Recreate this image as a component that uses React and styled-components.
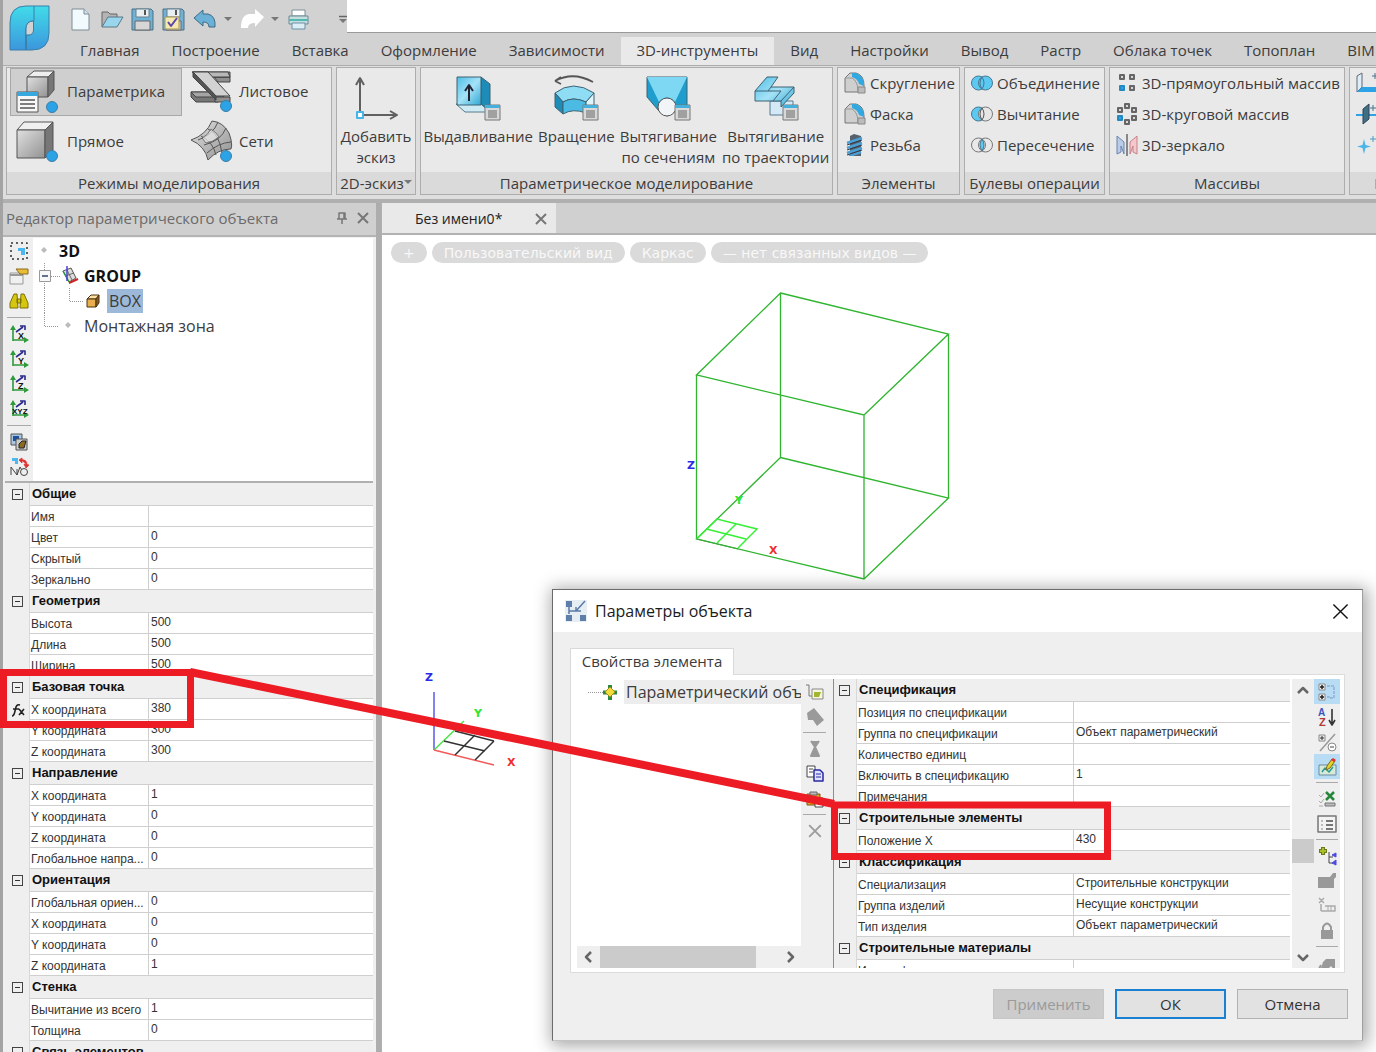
import React from "react";
import styled, { createGlobalStyle } from "styled-components";

const ui = '"Open Sans", "Noto Sans", sans-serif';
const small = '"Liberation Sans", Arial, sans-serif';

const Global = createGlobalStyle`
  * { box-sizing: border-box; }
  body { margin: 0; background: #fff; font-family: ${ui}; font-size: 15px; color: #3c3c3c; overflow: hidden; }
  button { font: inherit; color: inherit; border: 0; padding: 0; background: none; cursor: default; }
  svg { display: block; flex: none; }
`;

const Shell = styled.div`
  position: relative;
  display: flex;
  flex-direction: column;
  height: 100vh;
  padding-left: 3px;
  background: #a3a3a3;
  overflow: hidden;
`;

/* ---------- header ---------- */
const Header = styled.header`
  display: grid;
  grid-template-columns: 61px 1fr;
  grid-template-rows: 33px 32px;
  background: #d2d2d2;
  border-bottom: 1px solid #adadad;
`;
const Logo = styled.div`
  grid-row: 1 / 3;
  padding: 5px 0 0 6px;
`;
const TopLine = styled.div`
  display: flex;
`;
const QuickBar = styled.div`
  display: flex;
  align-items: center;
  flex: 0 0 283px;
  padding: 6px 0 0 5px;
  gap: 8px;
`;
const QuickButton = styled.button`
  width: ${(p) => (p.$narrow ? 8 : 23)}px;
  height: 24px;
  margin-left: ${(p) => (p.$push ? "auto" : 0)};
  display: grid;
  place-items: center;
`;
const Blank = styled.div`
  flex: 1;
  background: #fff;
  border-bottom: 1px solid #9a9a9a;
`;
const Tabs = styled.nav`
  display: flex;
  min-width: 0;
  overflow: hidden;
  padding-top: 4px;
`;
const RibbonTab = styled.button`
  flex: none;
  padding: 0 16px 3px;
  white-space: nowrap;
  line-height: 24px;
  font-size: 15px;
  background: ${(p) => (p.$on ? "#e9e9e9" : "transparent")};
`;

/* ---------- ribbon ---------- */
const Ribbon = styled.div`
  display: flex;
  gap: 4px;
  flex: 0 0 135px;
  padding: 1px 0 4px 3px;
  background: #dedede;
  border-bottom: 2px solid #b0b0b0;
  overflow: hidden;
`;
const Group = styled.section`
  flex: 0 0 ${(p) => p.$w}px;
  display: flex;
  flex-direction: column;
  border: 1px solid #adadad;
  background: #e9e9e9;
  overflow: hidden;
`;
const GroupBody = styled.div`
  flex: 1;
  min-height: 0;
  display: flex;
  flex-direction: ${(p) => (p.$column ? "column" : "row")};
  justify-content: ${(p) => (p.$around ? "space-around" : "flex-start")};
`;
const GroupTitle = styled.div`
  flex: 0 0 22px;
  display: flex;
  align-items: center;
  justify-content: center;
  line-height: 22px;
  white-space: nowrap;
  background: #dadada;
`;
const ModeGrid = styled.div`
  display: grid;
  grid-template-columns: 172px 1fr;
  grid-template-rows: 48px 48px;
  row-gap: 2px;
  flex: 1;
  padding-left: 3px;
`;
const ModeButton = styled.button`
  display: flex;
  align-items: center;
  gap: 5px;
  padding: 0 0 2px 5px;
  border: 1px solid ${(p) => (p.$on ? "#a8a8a8" : "transparent")};
  background: ${(p) => (p.$on ? "#cfcfcf" : "transparent")};
`;
const BigButton = styled.button`
  display: flex;
  flex-direction: column;
  align-items: center;
  padding-top: 7px;
  gap: 5px;
  line-height: 21px;
  white-space: pre-line;
`;
const LineButton = styled.button`
  display: flex;
  align-items: center;
  flex: 0 0 31px;
  gap: 4px;
  padding: 0 0 2px 6px;
  white-space: nowrap;
`;

/* ---------- body ---------- */
const Body = styled.div`
  flex: 1;
  min-height: 0;
  display: flex;
  padding-top: 2px;
  background: #b0b0b0;
`;
const Side = styled.aside`
  flex: 0 0 378px;
  display: flex;
  flex-direction: column;
  background: #f0f0f0;
  border-right: 5px solid #adadad;
  overflow: hidden;
`;
const SideTitle = styled.div`
  flex: 0 0 34px;
  display: flex;
  align-items: center;
  gap: 9px;
  padding: 0 7px 3px 3px;
  color: #6a6a6a;
  background: #cfcfcf;
  border-bottom: 2px solid #b4b4b4;
  span { flex: 1; }
`;
const TreeArea = styled.div`
  display: flex;
  flex: 0 0 244px;
  padding: 1px 3px 0 2px;
`;
const Tools = styled.div`
  flex: 0 0 ${(p) => p.$w}px;
  display: flex;
  flex-direction: column;
  align-items: stretch;
  background: #efefef;
  overflow: hidden;
`;
const Tool = styled.button`
  flex: 0 0 25px;
  display: grid;
  place-items: center;
  background: ${(p) => (p.$on ? "#b9dcf5" : "transparent")};
`;
const ToolLine = styled.div`
  flex: 0 0 ${(p) => p.$h}px;
  display: flex;
  align-items: center;
  padding: 0 2px;
  &::before { content: ""; flex: 1; height: 1px; background: #a9a9a9; }
`;
const Tree = styled.div`
  flex: 1;
  min-width: 0;
  background: #fff;
  overflow: hidden;
`;
const TreeRow = styled.div`
  display: flex;
  align-items: center;
  height: 25px;
  font-size: 16px;
  line-height: 24px;
  white-space: nowrap;
  font-weight: ${(p) => (p.$bold ? 700 : 400)};
  color: ${(p) => (p.$bold ? "#111" : "#3c3c3c")};
`;
const Picked = styled.span`
  padding: 0 2px;
  margin: 0 -1px;
  background: ${(p) => p.$bg};
`;

/* ---------- property table ---------- */
const GridFrame = styled.div`
  flex: 1;
  min-width: 0;
  min-height: 0;
  overflow: hidden;
  border-top: ${(p) => (p.$line ? "2px solid #b0b0b0" : "0")};
  margin: ${(p) => (p.$line ? "0 3px 0 2px" : "0")};
`;
const PropTable = styled.table`
  width: 100%;
  table-layout: fixed;
  border-spacing: 0;
  font-family: ${small};
  font-size: 12px;
  color: #333;
  th, td { padding: 0 2px; text-align: left; white-space: nowrap; overflow: hidden; }
`;
const HeadCell = styled.th`
  height: 23px;
  line-height: 20px;
  font-size: 13px;
  font-weight: 700;
  color: #111;
  background: #efefef;
  border-bottom: 1px solid #cfcfcf;
`;
const Gutter = styled.td`
  background: #efefef;
  border-right: 1px solid #d8d8d8;
  svg { margin-left: 4px; }
`;
const NameCell = styled.td`
  height: 21px;
  line-height: 17px;
  background: #fff;
  border-bottom: 1px solid #cfcfcf;
  border-right: 1px solid #cfcfcf;
  && { padding: 3px 0 0 1px; }
`;
const ValueCell = styled.td`
  height: 21px;
  line-height: 18px;
  background: #fff;
  border-bottom: 1px solid #cfcfcf;
  && { padding-bottom: 2px; }
`;
const Fold = styled.button`
  width: 11px;
  height: 11px;
  display: block;
  margin: 0 4px 0 auto;
  border: 1px solid #444;
  &::before { content: ""; display: block; height: 1px; margin: 0 2px; background: #333; }
`;

/* ---------- drawing area ---------- */
const Work = styled.main`
  flex: 1;
  min-width: 0;
  display: flex;
  flex-direction: column;
  margin-left: 1px;
  background: #fff;
`;
const DocBar = styled.div`
  flex: 0 0 32px;
  display: flex;
  background: #d0d0d0;
  border-bottom: 2px solid #b2b2b2;
`;
const DocTab = styled.div`
  flex: 0 0 174px;
  display: flex;
  align-items: center;
  justify-content: space-between;
  padding: 1px 9px 0 33px;
  font-size: 14px;
  color: #222;
  background: #e9e9e9;
`;
const Canvas = styled.div`
  position: relative;
  flex: 1;
  min-height: 0;
`;
const Pills = styled.div`
  display: flex;
  gap: 5px;
  padding: 7px 0 0 9px;
`;
const Pill = styled.button`
  height: 21px;
  line-height: 20px;
  padding: 0 12px;
  border-radius: 11px;
  font-family: "DejaVu Sans", sans-serif;
  font-size: 14px;
  color: #f8f8f8;
  background: #dadada;
`;
const Scene = styled.svg`
  position: absolute;
  left: 0;
  top: 0;
  width: 100%;
  height: 100%;
  pointer-events: none;
  text { font: 700 11px "DejaVu Sans", sans-serif; }
`;
const Marks = styled.svg`
  position: absolute;
  left: 0;
  top: 0;
  width: 100%;
  height: 100%;
  pointer-events: none;
`;

/* ---------- dialog ---------- */
const Dialog = styled.section`
  position: absolute;
  left: 170px;
  top: 354px;
  width: 811px;
  border: 1px solid #6b6b6b;
  border-right-color: #a0a0a0;
  border-bottom-color: #c4c4c4;
  background: #efefef;
  box-shadow: 2px 2px 16px 3px rgba(0, 0, 0, 0.34);
`;
const DialogTitle = styled.div`
  height: 42px;
  display: flex;
  align-items: center;
  gap: 7px;
  padding: 0 13px 0 11px;
  font-size: 16px;
  color: #1c1c1c;
  background: #fff;
  span { flex: 1; }
`;
const DialogTab = styled.div`
  width: 164px;
  height: 27px;
  margin: 16px 0 -1px 17px;
  position: relative;
  line-height: 25px;
  text-align: center;
  font-size: 15px;
  background: #fff;
  border: 1px solid #d9d9d9;
  border-bottom: 0;
`;
const Pane = styled.div`
  display: flex;
  height: 299px;
  margin: 0 17px;
  padding: 4px 4px 4px 6px;
  background: #fff;
  border: 1px solid #dcdcdc;
`;
const TreeColumn = styled.div`
  flex: 0 0 224px;
  min-width: 0;
  display: flex;
  flex-direction: column;
`;
const HScroll = styled.div`
  flex: 0 0 22px;
  display: flex;
  align-items: center;
  background: #efefef;
`;
const HThumb = styled.div`
  width: 156px;
  align-self: stretch;
  background: #cbcbcb;
`;
const ArrowButton = styled.button`
  flex: 0 0 23px;
  display: grid;
  place-items: center;
  margin-left: ${(p) => (p.$end ? "auto" : 0)};
`;
const Divider = styled.div`
  width: 6px;
  background: #efefef;
  border-right: 1px solid #8d8d8d;
`;
const VScroll = styled.div`
  flex: 0 0 22px;
  margin-left: 2px;
  display: flex;
  flex-direction: column;
  background: #efefef;
`;
const VThumb = styled.div`
  height: 24px;
  margin-top: 137px;
  background: #cbcbcb;
`;
const VSpace = styled.div`
  flex: 1;
`;
const Buttons = styled.div`
  display: flex;
  justify-content: flex-end;
  gap: 11px;
  padding: 16px 14px 21px;
`;
const PushButton = styled.button`
  width: 111px;
  height: 30px;
  color: ${(p) => (p.disabled ? "#9a9a9a" : "#333")};
  background: ${(p) => (p.disabled ? "#cccccc" : "#e2e2e2")};
  border: ${(p) => (p.$main ? "2px solid #1a80d2" : p.disabled ? "1px solid #c6c6c6" : "1px solid #b2b2b2")};
`;

/* ---------- drawings ---------- */
const Svg = ({ w = 20, h = w, vb, children, ...rest }) => (
  <svg width={w} height={h} viewBox={vb || `0 0 ${w} ${h}`} fill="none" strokeLinejoin="round" {...rest}>
    {children}
  </svg>
);

const Defs = () => (
  <svg width="0" height="0" style={{ position: "absolute" }} aria-hidden="true">
    <defs>
      <linearGradient id="logo" x1="0" y1="0" x2="0" y2="1"><stop offset="0" stopColor="#41dcea" /><stop offset="1" stopColor="#3c96dc" /></linearGradient>
      <linearGradient id="grey" x1="0" y1="0" x2="1" y2="1"><stop offset="0" stopColor="#e0e0e0" /><stop offset="1" stopColor="#929292" /></linearGradient>
      <linearGradient id="sky" x1="0" y1="0" x2="1" y2="1"><stop offset="0" stopColor="#4fbfe6" /><stop offset=".5" stopColor="#a5e2f7" /><stop offset="1" stopColor="#2ea6d3" /></linearGradient>
    </defs>
  </svg>
);

const LogoIcon = () => (
  <Svg w={42} h={48} stroke="#3a7fa8">
    <path d="M17 1H40V28Q40 45 23 45H17V30H19Q24 30 24 25V16Q17 16 17 24V45H1V18Q1 1 17 1Z" fill="url(#logo)" />
    <path d="M25 1V16M17 24V45" />
    <path d="M24.500 16Q17 16 17 24V30H19Q24.500 30 24.500 25Z" fill="#d2d2d2" />
  </Svg>
);
const Floppy = ({ check }) => (
  <>
    <path d="M1 1H20L22 3V22H1Z" fill="#6fb2d6" stroke="#4a7187" />
    <path d="M5 1H18V9H5Z" fill="#e9eef0" stroke="#66808e" />
    <path d="M13 2V7H15V2Z" fill="#555" />
    <path d="M4 13H19V22H4Z" fill="#d6d6d6" stroke="#666" />
    {check && <><path d="M3 9H17V21H3Z" fill="#f5e8b0" stroke="#a69455" /><path d="M6 14L9 18L15 10" stroke="#5a46a8" strokeWidth="2" /></>}
  </>
);
const quick = {
  page: <><path d="M3 1H15L20 6V22H3Z" fill="#f3fafd" stroke="#7c8c94" /><path d="M15 1V6H20" fill="#cfe8f4" stroke="#7c8c94" /></>,
  open: <><path d="M2 19V4H8L10 6H17V10" fill="#b4b4b4" stroke="#666" /><path d="M2 19L8 9H23L17 19Z" fill="#9ad5ee" stroke="#5c7886" /></>,
  save: <Floppy />,
  saveAs: <Floppy check />,
  undo: <path d="M1 10L10 2V6H15Q23 8 22 19H16Q16 14 10 14V18Z" fill="#6bb0d6" stroke="#3c6a84" />,
  redo: <path d="M24 9L15 1V6H9Q1 7 1 20H8Q8 15 15 15V19Z" fill="#fff" />,
  print: <><path d="M5 2H18V8H5Z" fill="#fff" stroke="#7d8f96" /><path d="M2 8H21V16H2Z" fill="#c5dfe0" stroke="#6a8a92" /><path d="M2 12H21" stroke="#55b8b3" strokeWidth="2" /><path d="M5 15H18V21H5Z" fill="#dceef5" stroke="#6a8fa6" /></>,
};
const Caret = ({ bar }) => (
  <Svg w={8} h={10}>{bar && <path d="M0 1.500H8" stroke="#666" strokeWidth="1.500" />}<path d={bar ? "M0 4H8L4 8Z" : "M0 2H8L4 6Z"} fill="#777" /></Svg>
);

const Dot = ({ x = 36, y = 38 }) => <circle cx={x} cy={y} r="5.500" fill="#2ba3e6" stroke="#3c7fa5" />;
const ModeParam = () => (
  <Svg w={46}><g stroke="#555"><path d="M11 9L18 3H38L32 9Z" fill="#eee" /><path d="M11 9H32V29H11Z" fill="url(#grey)" /><path d="M32 9L38 3V22L32 29Z" fill="#777" /><path d="M1 24H22V44H1Z" fill="#f7f7f7" /></g><path d="M1 24H22V28H1Z" fill="#37a9df" /><path d="M4 32H19M4 36H19M4 40H19" stroke="#555" strokeWidth="1.500" /><Dot x={36} y={39} /></Svg>
);
const ModeDirect = () => (
  <Svg w={46}><g stroke="#555"><path d="M1 12L8 4H37L29 12Z" fill="#f0f0f0" /><path d="M1 12H29V40H1Z" fill="url(#grey)" /><path d="M29 12L37 4V32L29 40Z" fill="#777" /></g><Dot x={36} y={38} /></Svg>
);
const ModeSheet = () => (
  <Svg w={46} stroke="#444"><path d="M26 9H42V14H30ZM4 4L42 4V9H25Z" fill="#8f8f8f" /><path d="M5 4H40L42 9H20Z" fill="#b8b8b8" /><path d="M3 24H30V34H8L3 29Z" fill="#777" /><path d="M3 24H32L36 29H8Z" fill="#a5a5a5" /><path d="M27 29H42V34H27Z" fill="#8f8f8f" /><path d="M5 4H20L42 28H28Z" fill="#d2d2d2" /><path d="M5 4L28 28V32L5 9Z" fill="#555" /><Dot x={38} y={38} /></Svg>
);
const ModeMesh = () => (
  <Svg w={46} stroke="#555"><path d="M3 22Q18 17 24 3Q35 4 41 15Q45 26 43 31Q30 31 20 42Q17 28 3 22Z" fill="url(#grey)" /><path d="M10 22Q25 17 30 4M16 27Q33 23 38 10M19 35Q30 25 43 24M20 11Q31 15 34 35M13 18Q25 24 28 37" fill="none" /><path d="M14 20Q20 17 23 11Q29 15 31 19Q25 24 18 25Z" fill="#e8e8e8" opacity=".7" /><Dot x={38} y={38} /></Svg>
);
const SketchIcon = () => (
  <Svg w={46} stroke="#606060" strokeWidth="2"><path d="M7 37V4M3 10L7 3L11 10M11 40H43M37 36L44 40L37 44" /><path d="M4 37H10V43H4Z" fill="#fff" stroke="#45b4e6" /></Svg>
);
const MiniForm = () => (
  <g><path d="M30 30H45V45H30Z" fill="#d8d8d8" stroke="#777" /><path d="M30 30H45V33H30Z" fill="#45b0dc" /><path d="M33 35H42V43H33Z" fill="#a0a0a0" /></g>
);
const big = {
  extrude: <><path d="M1 29L10 37H34L27 29Z" fill="#cdeaf5" stroke="#5a7a88" /><path d="M26 2L35 9V37L26 29Z" fill="#1d8cb8" stroke="#3d6272" /><path d="M2 2H26V30H2Z" fill="url(#sky)" stroke="#3d6272" /><path d="M14 26V12M10 16L14 10L18 16" stroke="#223" strokeWidth="2" /></>,
  revolve: <><path d="M2 6Q20 -4 40 7M2 6L8 2M2 6L8 9" stroke="#555" strokeWidth="1.800" /><path d="M2 18Q20 4 41 18L33 27Q20 21 10 27Z" fill="#8fdcf5" stroke="#3d6272" /><path d="M2 18L10 27V39L2 32Z" fill="#1d8cb8" stroke="#3d6272" /><path d="M10 27Q20 21 33 27V38Q20 33 10 39Z" fill="#4bbbe3" stroke="#3d6272" /><path d="M41 18V30L33 38V27Z" fill="#dff3fa" stroke="#3d6272" /></>,
  loft: <><path d="M2 2H42V30L22 41L14 36L2 22Z" fill="#1f9dcc" stroke="#3d6272" /><path d="M2 2H42L30 27Q22 18 14 27Z" fill="#7ed8f3" /><circle cx="22" cy="32" r="9" fill="#f1f5f7" stroke="#555" /></>,
  sweep: <><path d="M17 26H40V40H17Z" fill="#d5e8f5" stroke="#557a90" /><path d="M2 16L14 2H25L18 12H41V18L28 32V26H2Z" fill="url(#sky)" stroke="#3d6272" /><path d="M2 16H28L20 26M41 12L28 26M18 12L15 16" stroke="#3d6272" /></>,
};
const Cell = ({ x, y, on }) => <path d={`M${x} ${y}h4v4h-4Z`} fill={on ? "#2ba3e6" : "#d8d8d8"} stroke={on ? "#2389c4" : "#666"} strokeWidth="2" />;
const Corner = () => <><path d="M1 20V6L6 1H12Q20 3 20 13V20Z" fill="#cfcfcf" stroke="#777" /><path d="M8 1H12Q20 4 20 14L15 12Q14 7 8 5Z" fill="#30a9e0" /><path d="M1 6H8Q14 9 14 20" stroke="#999" /><path d="M14 15H21V21H14Z" fill="#bbb" stroke="#888" /></>;
const line = {
  fillet: <Corner />,
  chamfer: <Corner />,
  thread: <><path d="M6 2L10 0L17 2V22H6Z" fill="#56616b" /><path d="M3 9L18 4M3 14L18 9M3 19L18 14M5 22L17 18" stroke="#4b9fd6" strokeWidth="2.400" /><path d="M3 11L18 6M3 16L18 11M3 21L18 16" stroke="#333b44" /></>,
  union: <><circle cx="7.500" cy="11" r="7" fill="#5cc9f3" stroke="#48778d" /><circle cx="14.500" cy="11" r="7" fill="#5cc9f3" stroke="#48778d" /><path d="M11 5Q15 11 11 17Q7 11 11 5" stroke="#48778d" /></>,
  subtract: <><circle cx="7.500" cy="11" r="7" fill="#5cc9f3" stroke="#48778d" /><circle cx="14.500" cy="11" r="7" fill="#e6e6e6" stroke="#777" /><path d="M11 5Q7 11 11 17Q15 11 11 5" fill="#e6e6e6" stroke="#555" /></>,
  intersect: <><circle cx="7.500" cy="11" r="7" stroke="#777" /><circle cx="14.500" cy="11" r="7" stroke="#777" /><path d="M11 5Q7 11 11 17Q15 11 11 5" fill="#5cc9f3" stroke="#48778d" /></>,
  rect: <><Cell x={4} y={3} /><Cell x={14} y={3} /><Cell x={4} y={14} on /><Cell x={14} y={14} /></>,
  polar: <><Cell x={9} y={1} /><Cell x={2} y={5} /><Cell x={16} y={5} /><Cell x={2} y={13} on /><Cell x={16} y={13} /><Cell x={9} y={17} /></>,
  mirror: <><path d="M1 20V2L8 8V20L5 12V18Z" fill="#b9cce8" stroke="#6b83ad" /><path d="M21 20V2L14 8V20L17 12V18Z" fill="#f4c8cc" stroke="#c98088" /><path d="M11 0V22" stroke="#666" strokeWidth="1.500" /></>,
  plane: <><path d="M1 4L6 1V15L1 20Z" fill="#dceef7" stroke="#667" /><path d="M1 20L6 15H22V20Z" fill="#2ba3e6" /><path d="M16 4H22M19 1V7" stroke="#4b7287" /></>,
  axis: <><path d="M0 12H22" stroke="#2ba3e6" strokeWidth="2" /><path d="M7 6L13 1V16L7 21Z" fill="#3e6f85" stroke="#345" /><path d="M14 5H20M17 2V8" stroke="#4b7287" /></>,
  point: <><path d="M8 5L9.500 11L15 12.500L9.500 14L8 20L6.500 14L1 12.500L6.500 11Z" fill="#4bb4ea" /><path d="M14 5H20M17 2V8" stroke="#4b9cc0" /></>,
};
const Axis = ({ name, wide }) => (
  <Svg w={20}><path d="M4 17V3M4 16H18" stroke="#2e9a3c" strokeWidth="1.600" /><path d="M1 6L4 1L7 6ZM15 13L20 16L15 19Z" fill="#2e9a3c" /><path d="M7 8L14 3M11 2H16V6" stroke="#2a2a8c" strokeWidth="1.600" /><text x={wide ? 3 : 9} y="15" fontSize={wide ? 8 : 9} fontWeight="700" fontFamily="Liberation Sans, sans-serif" fill="#111">{name}</text></Svg>
);
const Cube = ({ x = 0, y = 0 }) => (
  <g transform={`translate(${x} ${y})`} stroke="#4b3310"><path d="M1 5L5 1H13L10 5Z" fill="#ffe0a0" /><path d="M1 5H10V13H1Z" fill="#e9ae4e" /><path d="M10 5L13 1V9L10 13Z" fill="#8a5c1c" /></g>
);
const X = ({ size = 12, color = "#777", width = 2 }) => (
  <Svg w={size} vb="0 0 12 12" stroke={color} strokeWidth={width}><path d="M1 1L11 11M11 1L1 11" /></Svg>
);
const Chevron = ({ turn }) => (
  <Svg w={12} stroke="#666" strokeWidth="2.500"><path d="M1 8L6 3L11 8" transform={`rotate(${turn} 6 6)`} /></Svg>
);

const sideTools = [
  ["Выбор", <Svg w={20}><path d="M2 2H18V18H2Z" stroke="#333" strokeWidth="1.500" strokeDasharray="2 3" /><path d="M9 7H16V14H12V10H9Z" fill="#4bb9ef" /></Svg>],
  ["Свойства", <Svg w={20}><path d="M1 7H14V18H1Z" fill="#f0f0f0" stroke="#999" /><path d="M1 9H14" stroke="#999" strokeWidth="2" /><path d="M7 3H19V8H11Z" fill="#e9bc3a" stroke="#8c6a1c" /></Svg>],
  ["Найти", <Svg w={20}><path d="M1 17V12L5 3H8L9 17ZM19 17V12L15 3H12L11 17ZM8 8H12V12H8Z" fill="#d6c60f" stroke="#7d7108" /></Svg>],
  null,
  ["По X", <Axis name="X" />],
  ["По Y", <Axis name="Y" />],
  ["По Z", <Axis name="Z" />],
  ["По XYZ", <Axis name="XYZ" wide />],
  null,
  ["Слои", <Svg w={20}><path d="M2 2H13V13H2Z" fill="#a9c6dc" stroke="#555" /><path d="M4 4H10V9H4Z" fill="#1c4f9e" /><path d="M7 7H18V18H7Z" fill="#ccc" stroke="#555" /><path d="M10 12L13 9H17L15 16H10Z" fill="#8a6a20" stroke="#222" /></Svg>],
  ["Сброс", <Svg w={20}><path d="M3 1H9V7H6V4H3Z" fill="#4bb9ef" /><path d="M12 3Q18 2 18 8M10 3L13 1V6ZM15 7L20 8L17 11Z" stroke="#d33" fill="#d33" strokeWidth=".8" /><path d="M2 18V10L8 18V12M8 18L11 10L14 15" stroke="#444" /><circle cx="15" cy="15" r="3.500" stroke="#444" fill="#eee" /></Svg>],
];
const midTools = [
  ["Добавить", <Svg w={20}><path d="M1 3H4V14H8" stroke="#777" /><path d="M7 7H18V17H7Z" fill="#f5f5e0" stroke="#888" /><path d="M9 10H16L14 15H9Z" fill="#a3b52c" /></Svg>],
  ["Элемент", <Svg w={20}><path d="M2 6L9 1L19 13L12 19L8 13H3Z" fill="#9a9a9a" /></Svg>],
  null,
  ["Вырезать", <Svg w={20}><path d="M6 2L10 8L14 2M10 8L6 17H14Z" fill="#999" stroke="#999" strokeWidth="2" /></Svg>],
  ["Копировать", <Svg w={20}><path d="M2 2H10V13H2Z" fill="#fff" stroke="#444" /><path d="M4 5H8M4 8H8" stroke="#444" /><path d="M9 6H15L18 9V17H9Z" fill="#dfe2ff" stroke="#2a2aa0" strokeWidth="1.500" /><path d="M11 10H16M11 13H16" stroke="#2a2aa0" /></Svg>],
  ["Вставить", <Svg w={20}><path d="M2 5H15V16H2Z" fill="#e0a528" stroke="#7c5710" /><path d="M5 3H12V6H5Z" fill="#bbb" stroke="#666" /><path d="M10 9H18V18H10Z" fill="#fff" stroke="#444" /></Svg>],
  null,
  ["Удалить", <X size={14} color="#9c9c9c" width={1.6} />],
];
const rightTools = [
  ["Категории", <Svg w={20}><path d="M2 2H8V8H2ZM2 12H8V18H2Z" fill="#f6f6f6" stroke="#888" /><path d="M3 5H7M5 3V7M3 15H7M5 13V17" stroke="#222" strokeWidth="1.500" /><path d="M10 4H17V16H13M10 15H13" stroke="#7a9cc0" strokeDasharray="3 1" /></Svg>, true],
  ["Сортировка", <Svg w={20}><text x="1" y="9" fontSize="10" fontWeight="700" fontFamily="Liberation Sans, sans-serif" fill="#3b55c0">A</text><text x="2" y="19" fontSize="11" fontWeight="700" fontFamily="Liberation Sans, sans-serif" fill="#b03a3a">Z</text><path d="M15 2V16M12 13L15 18L18 13" stroke="#333" strokeWidth="1.600" /></Svg>],
  ["Свернуть", <Svg w={20}><path d="M2 3H8V9H2Z" stroke="#888" /><path d="M3 6H7M5 4V8" stroke="#333" /><path d="M18 2L3 19" stroke="#999" strokeWidth="1.500" /><circle cx="15" cy="15" r="4" fill="#fff" stroke="#888" /><path d="M13 15H17" stroke="#444" /></Svg>],
  ["Правка", <Svg w={20}><path d="M2 8H19V18H2Z" fill="#d6ead8" stroke="#6b8ba0" /><path d="M5 15L8 11L12 15L16 10" stroke="#2a9a8f" strokeWidth="1.500" /><path d="M9 13L10 9L15 2L18 4L13 11Z" fill="#e8d02a" stroke="#7c6a1c" /><path d="M14 3L16 1L19 3L17 5Z" fill="#d33" /></Svg>, true],
  null,
  ["Отметить", <Svg w={20}><path d="M2 6L4 8L7 4M2 12L4 14L7 10M2 17H6" stroke="#aaa" /><path d="M9 3L17 11M17 3L9 11" stroke="#27863a" strokeWidth="2.500" /><path d="M8 14H18V17H8Z" fill="#bbb" stroke="#777" /></Svg>],
  ["Список", <Svg w={20}><path d="M1 2H19V18H1Z" fill="#f3f3f3" stroke="#777" strokeWidth="1.500" /><path d="M9 7H16M9 11H16M9 15H16" stroke="#777" strokeWidth="2" /><path d="M4 7H6M4 11H6M4 15H6" stroke="#aaa" strokeWidth="1.500" /></Svg>],
  null,
  ["Узел", <Svg w={20}><path d="M6 1V9M2 5H10" stroke="#6d7a1a" strokeWidth="4" /><path d="M6 2V8M3 5H9" stroke="#a8bf2a" strokeWidth="2" /><path d="M12 6V17H16M12 11H16" stroke="#444" /><path d="M15 9L19 7V11ZM15 17L19 14V19Z" fill="#4b4be0" stroke="#4b4be0" /></Svg>],
  ["Папка", <Svg w={20}><path d="M1 6H13L16 2H19V6L17 8V17H1Z" fill="#999" /></Svg>],
  ["Размер", <Svg w={20}><path d="M2 2L7 7M7 2L2 7M4 8V15M8 10H18V15H4" stroke="#aaa" strokeWidth="1.500" /><path d="M11 10V15M14 10V15" stroke="#aaa" /></Svg>],
  ["Блокировка", <Svg w={20}><path d="M6 10V6Q10 -1 14 6V10" stroke="#999" strokeWidth="2" /><path d="M4 9H16V18H4Z" fill="#999" /></Svg>],
  null,
  ["Ещё", <Svg w={20}><path d="M3 18L6 9L9 6H18V18L14 13L9 18Z" fill="#999" /><path d="M1 18L4 12" stroke="#999" strokeWidth="2" /></Svg>],
];

const ToolStrip = ({ items, w, gap = 7 }) => (
  <Tools $w={w}>
    {items.map((t, i) => t ? <Tool key={i} $on={t[2]} aria-label={t[0]}>{t[1]}</Tool> : <ToolLine key={i} $h={gap} />)}
  </Tools>
);

const coords = (x, y, z) => [["X координата", x], ["Y координата", y], ["Z координата", z]];
const sideProps = [
  ["Общие", [["Имя", ""], ["Цвет", "0"], ["Скрытый", "0"], ["Зеркально", "0"]]],
  ["Геометрия", [["Высота", "500"], ["Длина", "500"], ["Ширина", "500"]]],
  ["Базовая точка", [["X координата", "380", true], ["Y координата", "300"], ["Z координата", "300"]]],
  ["Направление", [...coords("1", "0", "0"), ["Глобальное напра...", "0"]]],
  ["Ориентация", [["Глобальная ориен...", "0"], ...coords("0", "0", "1")]],
  ["Стенка", [["Вычитание из всего", "1"], ["Толщина", "0"]]],
  ["Связь элементов", []],
];
const dialogProps = [
  ["Спецификация", [["Позиция по спецификации", ""], ["Группа по спецификации", "Объект параметрический"], ["Количество единиц", ""], ["Включить в спецификацию", "1"], ["Примечания", ""]]],
  ["Строительные элементы", [["Положение X", "430"]]],
  ["Классификация", [["Специализация", "Строительные конструкции"], ["Группа изделий", "Несущие конструкции"], ["Тип изделия", "Объект параметрический"]]],
  ["Строительные материалы", [["Идентификатор материала", ""]]],
];

const Properties = ({ data, gutter, name }) => (
  <PropTable>
    <colgroup><col width={gutter} /><col width={name} /><col /></colgroup>
    {data.map(([title, rows]) => (
      <tbody key={title}>
        <tr><Gutter><Fold aria-label={"Свернуть: " + title} /></Gutter><HeadCell colSpan={2}>{title}</HeadCell></tr>
        {rows.map(([label, value, fx]) => (
          <tr key={label}>
            <Gutter>{fx && <Svg w={15} h={14} stroke="#222" strokeWidth="1.600"><path d="M1 13Q3 13 4 8L5 4Q6 1 9 2M2 6H8M8 6L13 12M13 6L8 12" /></Svg>}</Gutter>
            <NameCell>{label}</NameCell>
            <ValueCell>{value}</ValueCell>
          </tr>
        ))}
      </tbody>
    ))}
  </PropTable>
);

const tabs = ["Главная", "Построение", "Вставка", "Оформление", "Зависимости", "3D-инструменты", "Вид", "Настройки", "Вывод", "Растр", "Облака точек", "Топоплан", "BIM"];

const LineGroup = ({ w, title, items }) => (
  <Group $w={w}>
    <GroupBody $column>
      {items.map(([icon, label]) => <LineButton key={icon} aria-label={label || icon}><Svg w={22}>{line[icon]}</Svg>{label}</LineButton>)}
    </GroupBody>
    <GroupTitle>{title}</GroupTitle>
  </Group>
);
const Q = ({ icon, label }) => <QuickButton aria-label={label}><Svg w={24}>{quick[icon]}</Svg></QuickButton>;
const Big = ({ icon, children }) => <BigButton><Svg w={46}>{big[icon]}<MiniForm /></Svg>{children}</BigButton>;

export default function App() {
  return (
    <Shell>
      <Global />
      <Defs />
      <Header>
        <Logo><LogoIcon /></Logo>
        <TopLine>
          <QuickBar>
            <Q icon="page" label="Создать" />
            <Q icon="open" label="Открыть" />
            <Q icon="save" label="Сохранить" />
            <Q icon="saveAs" label="Сохранить как" />
            <Q icon="undo" label="Отменить" />
            <QuickButton $narrow aria-label="История отмен"><Caret /></QuickButton>
            <Q icon="redo" label="Вернуть" />
            <QuickButton $narrow aria-label="История возвратов"><Caret /></QuickButton>
            <Q icon="print" label="Печать" />
            <QuickButton $narrow $push aria-label="Настроить панель"><Caret bar /></QuickButton>
          </QuickBar>
          <Blank />
        </TopLine>
        <Tabs>{tabs.map((t) => <RibbonTab key={t} $on={t === "3D-инструменты"}>{t}</RibbonTab>)}</Tabs>
      </Header>

      <Ribbon>
        <Group $w={326}>
          <GroupBody>
            <ModeGrid>
              <ModeButton $on><ModeParam />Параметрика</ModeButton>
              <ModeButton><ModeSheet />Листовое</ModeButton>
              <ModeButton><ModeDirect />Прямое</ModeButton>
              <ModeButton><ModeMesh />Сети</ModeButton>
            </ModeGrid>
          </GroupBody>
          <GroupTitle>Режимы моделирования</GroupTitle>
        </Group>
        <Group $w={80}>
          <GroupBody $around><BigButton><SketchIcon />{"Добавить\nэскиз"}</BigButton></GroupBody>
          <GroupTitle>2D-эскиз<Caret /></GroupTitle>
        </Group>
        <Group $w={413}>
          <GroupBody $around>
            <Big icon="extrude">Выдавливание</Big>
            <Big icon="revolve">Вращение</Big>
            <Big icon="loft">{"Вытягивание\nпо сечениям"}</Big>
            <Big icon="sweep">{"Вытягивание\nпо траектории"}</Big>
          </GroupBody>
          <GroupTitle>Параметрическое моделирование</GroupTitle>
        </Group>
        <LineGroup w={123} title="Элементы" items={[["fillet", "Скругление"], ["chamfer", "Фаска"], ["thread", "Резьба"]]} />
        <LineGroup w={141} title="Булевы операции" items={[["union", "Объединение"], ["subtract", "Вычитание"], ["intersect", "Пересечение"]]} />
        <LineGroup w={236} title="Массивы" items={[["rect", "3D-прямоугольный массив"], ["polar", "3D-круговой массив"], ["mirror", "3D-зеркало"]]} />
        <LineGroup w={60} title="В" items={[["plane", ""], ["axis", ""], ["point", ""]]} />
      </Ribbon>

      <Body>
        <Side>
          <SideTitle>
            <span>Редактор параметрического объекта</span>
            <button aria-label="Закрепить"><Svg w={12} stroke="#777" strokeWidth="1.500"><path d="M3 1H9V7H3ZM1 7H11M6 7V12M8 1V7" /></Svg></button>
            <button aria-label="Закрыть"><X /></button>
          </SideTitle>
          <TreeArea>
            <ToolStrip items={sideTools} w={28} gap={8} />
            <Tree>
              <TreeRow $bold><Svg w={26} h={25}><path d="M11 9L14 12L11 15L8 12Z" fill="#bbb" /></Svg>3D</TreeRow>
              <TreeRow $bold>
                <Svg w={51} h={25}><path d="M11.500 0V25M18 13.500H28" stroke="#999" strokeDasharray="1 1" /><path d="M6.500 7.500H17.500V18.500H6.500Z" fill="#f8f8f8" stroke="#999" /><path d="M9 13H15" stroke="#346" strokeWidth="1.500" /><path d="M30 8L38 5L43 15L36 19Z" fill="#ddd" stroke="#555" /><path d="M34 7L39 17M32 13L41 10" stroke="#666" /><path d="M30 8L36 19" stroke="#2c9a3c" strokeWidth="1.500" /><path d="M34 3V18" stroke="#4a3fe0" strokeWidth="1.500" /><path d="M36 20L45 16" stroke="#c22" strokeWidth="2" /></Svg>GROUP
              </TreeRow>
              <TreeRow>
                <Svg w={75} h={25}><path d="M11.500 0V25M36.500 0V13M37 13.500H50" stroke="#999" strokeDasharray="1 1" /><Cube x={53} y={6} /></Svg><Picked $bg="#9db9da">BOX</Picked>
              </TreeRow>
              <TreeRow><Svg w={51} h={25}><path d="M11.500 0V13M12 13.500H26" stroke="#999" strokeDasharray="1 1" /><path d="M35 9L38 12L35 15L32 12Z" fill="#bbb" /></Svg>Монтажная зона</TreeRow>
            </Tree>
          </TreeArea>
          <GridFrame $line><Properties data={sideProps} gutter={25} name={119} /></GridFrame>
        </Side>

        <Work>
          <DocBar><DocTab>Без имени0*<button aria-label="Закрыть вкладку"><X /></button></DocTab></DocBar>
          <Canvas>
            <Pills>
              <Pill>+</Pill>
              <Pill>Пользовательский вид</Pill>
              <Pill>Каркас</Pill>
              <Pill>— нет связанных видов —</Pill>
            </Pills>
            <Scene>
              <g transform="translate(-382 -235)" fill="none">
                <path d="M780.500 293L948.500 334L864 415L696.500 375ZM780.500 457.500L948.500 498L864 579L696.500 539ZM780.500 293V457.500M948.500 334V498M864 415V579M696.500 375V539" stroke="#2fb52f" strokeWidth="1.300" />
                <path d="M696.500 539L717 519L757 529L738 548M706.500 529L746 539M736 524L717 543" stroke="#35f035" strokeWidth="1.500" />
                <path d="M696.500 539L738 549" stroke="#3aa83a" />
                <text x="687" y="469" fill="#2a2ae8">Z</text>
                <text x="735" y="504" fill="#2ee62e">Y</text>
                <text x="769" y="554" fill="#f03030">X</text>
                <path d="M434 692V750" stroke="#8282f0" strokeWidth="2" />
                <path d="M434 750L464 721" stroke="#45e645" strokeWidth="1.500" />
                <path d="M434 750L494 765" stroke="#f05a5a" strokeWidth="1.500" />
                <path d="M444 741L485 751M455 731L494 741M455 755L475 735M475 760L494 741" stroke="#333" strokeWidth="1.500" />
                <text x="425" y="681" fill="#2a2ae8">Z</text>
                <text x="474" y="717" fill="#2ee62e">Y</text>
                <text x="507" y="766" fill="#f03030">X</text>
              </g>
            </Scene>

            <Dialog role="dialog" aria-label="Параметры объекта">
              <DialogTitle>
                <Svg w={24}><path d="M1 1H23V23H1Z" fill="#e6eef4" /><path d="M2 2H8V8H2ZM2 16H8V22H2ZM16 16H22V22H16Z" fill="#5f7faa" /><path d="M5 8V15M5 12H12L21 2M12 8V12H17" stroke="#5b7aa8" strokeWidth="1.500" /></Svg>
                <span>Параметры объекта</span>
                <button aria-label="Закрыть окно"><X size={17} color="#111" width={1} /></button>
              </DialogTitle>
              <DialogTab>Свойства элемента</DialogTab>
              <Pane>
                <TreeColumn>
                  <Tree>
                    <TreeRow>
                      <Svg w={48} h={25}><path d="M11 13.500H26" stroke="#999" strokeDasharray="1 1" /><path d="M33 6V10M33 17V21M26 13.500H30M36 13.500H40" stroke="#2c8a3c" strokeWidth="4" /><path d="M33 8L38 13L33 18L28 13Z" fill="#f2dc3a" stroke="#a88a1c" /></Svg>
                      <Picked $bg="#ededed">Параметрический объ</Picked>
                    </TreeRow>
                  </Tree>
                  <HScroll>
                    <ArrowButton aria-label="Влево"><Chevron turn={-90} /></ArrowButton>
                    <HThumb />
                    <ArrowButton $end aria-label="Вправо"><Chevron turn={90} /></ArrowButton>
                  </HScroll>
                </TreeColumn>
                <ToolStrip items={midTools} w={27} />
                <Divider />
                <GridFrame><Properties data={dialogProps} gutter={23} name={217} /></GridFrame>
                <VScroll>
                  <ArrowButton aria-label="Вверх"><Chevron turn={0} /></ArrowButton>
                  <VThumb />
                  <VSpace />
                  <ArrowButton aria-label="Вниз"><Chevron turn={180} /></ArrowButton>
                </VScroll>
                <ToolStrip items={rightTools} w={26} />
              </Pane>
              <Buttons>
                <PushButton disabled>Применить</PushButton>
                <PushButton $main>ОК</PushButton>
                <PushButton>Отмена</PushButton>
              </Buttons>
            </Dialog>
          </Canvas>
        </Work>
      </Body>

      <Marks fill="none" stroke="#ed1c24" strokeWidth="7">
        <path d="M3.500 672.500H190.500V724.500H3.500Z" />
        <path d="M190 672L834 804" strokeWidth="8" />
        <path d="M834.500 805H1107.500V856.500H834.500Z" />
      </Marks>
    </Shell>
  );
}
